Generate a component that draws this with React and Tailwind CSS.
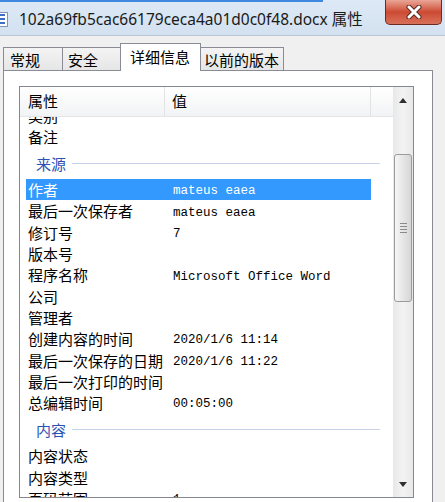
const cjk = "font-['Noto_Sans_CJK_SC','Noto_Sans',sans-serif]";
const mono = "font-['Liberation_Mono','DejaVu_Sans_Mono',monospace]";

const rows = [
  { label: '类别' },
  { label: '备注' },
  { group: '来源' },
  { label: '作者', value: 'mateus eaea', selected: true },
  { label: '最后一次保存者', value: 'mateus eaea' },
  { label: '修订号', value: '7' },
  { label: '版本号' },
  { label: '程序名称', value: 'Microsoft Office Word' },
  { label: '公司' },
  { label: '管理者' },
  { label: '创建内容的时间', value: '2020/1/6 11:14' },
  { label: '最后一次保存的日期', value: '2020/1/6 11:22' },
  { label: '最后一次打印的时间' },
  { label: '总编辑时间', value: '00:05:00' },
  { group: '内容' },
  { label: '内容状态' },
  { label: '内容类型' },
  { label: '页码范围', value: '1' },
];

const tabs = [
  { name: '常规', w: 'w-[60px] pl-[6px]' },
  { name: '安全', w: 'w-[59px] pl-[5px]' },
  { name: '详细信息', w: 'w-[81px] pl-[9px]', active: true },
  { name: '以前的版本', w: 'w-[84px] pl-[3px]' },
];

const Row = ({ label, value, selected }) => (
  <div
    className={`h-[21.3px] w-[345px] ml-[6px] flex items-center text-[15px] leading-none ${
      selected ? 'bg-[#3399ff] text-white' : 'text-black'
    }`}
  >
    <span className={`w-[147px] shrink-0 pl-[2px] whitespace-nowrap ${cjk}`}>{label}</span>
    {value && <span className={`pt-[4px] text-[12.5px] whitespace-pre ${mono}`}>{value}</span>}
  </div>
);

const GroupRow = ({ name }) => (
  <div className="h-[32px] w-[354px] ml-[6px] pl-[10px] flex items-center">
    <span className={`text-[15px] leading-none text-[#2a52b5] ${cjk}`}>{name}</span>
    <div className="flex-1 h-px bg-[#c8d3ea] ml-[6px]" />
  </div>
);

const Arrow = ({ down }) => (
  <svg width="8" height="5" viewBox="0 0 8 5">
    <path d={down ? 'M0 0 L8 0 L4 5 Z' : 'M0 5 L8 5 L4 0 Z'} fill="#303030" />
  </svg>
);

export default function App() {
  return (
    <div className={`w-[445px] h-[502px] overflow-hidden bg-[#f0f0f0] ${cjk}`}>
      {/* title bar */}
      <div className="h-[36px] flex items-start bg-gradient-to-b from-[#dde9f6] to-[#d3e1f0] border-b border-[#b8c6d6]">
        <div className="w-[385px] shrink-0">
          <div className="h-[2px] w-[323px] bg-[#3f88e0]" />
          <div className="flex items-center mt-[8px]">
            <div className="w-[8px] h-[15px] bg-white border-y border-r border-[#7d97b8] flex flex-col justify-center gap-[2px] pr-[2px]">
              <div className="h-[2px] bg-[#3e6fc4]" />
              <div className="h-[2px] bg-[#3e6fc4]" />
              <div className="h-[2px] bg-[#3e6fc4]" />
            </div>
            <span className="ml-[11px] text-[15.5px] leading-[18px] text-[#1a1a1a] whitespace-nowrap font-['Noto_Sans','Noto_Sans_CJK_SC',sans-serif]">
              102a69fb5cac66179ceca4a01d0c0f48.docx 属性
            </span>
          </div>
        </div>
        <div className="w-[57px] h-[25px] rounded-b-[5px] border border-t-0 border-[#6d2a20] bg-gradient-to-b from-[#e9a596] via-[#cc4a33] to-[#d8705a] flex items-center justify-center">
          <svg width="18" height="14" viewBox="0 0 18 14">
            <path d="M4 2 L14 12 M14 2 L4 12" stroke="#5a2a22" strokeWidth="5" strokeLinecap="round" />
            <path d="M4 2 L14 12 M14 2 L4 12" stroke="#ffffff" strokeWidth="3" strokeLinecap="round" />
          </svg>
        </div>
      </div>

      {/* tabs */}
      <div className="h-[34px] flex items-end pl-[3px]">
        {tabs.map((t, i) => (
          <div
            key={t.name}
            className={`${t.w} ${i > 0 ? '-ml-px' : ''} border border-b-0 border-[#898c95] flex items-center text-[15px] leading-none text-black ${
              t.active
                ? 'h-[28px] mb-[-1px] relative z-10 bg-white pb-[2px]'
                : 'h-[23px] bg-gradient-to-b from-[#f4f4f4] to-[#e6e6e6] pt-[1px]'
            }`}
          >
            {t.name}
          </div>
        ))}
      </div>

      {/* tab panel */}
      <div className="ml-[3px] w-[430px] h-[440px] border border-[#898c95] bg-white pl-[15px] pt-[15px]">
        <div className="w-[395px] h-[412px] border border-[#828790] flex">
          <div className="w-[373px] flex flex-col overflow-hidden">
            <div className="h-[30px] shrink-0 flex border-b border-[#e5e5e5] bg-gradient-to-b from-white to-[#f2f3f5] text-[15px] text-black">
              <div className="w-[145px] pl-[8px] flex items-center border-r border-[#e3e3e3]">属性</div>
              <div className="w-[206px] pl-[7px] flex items-center border-r border-[#e3e3e3]">值</div>
            </div>
            <div className="flex-1 overflow-hidden">
              <div className="mt-[-12.6px]">
                {rows.map((r, i) =>
                  r.group ? <GroupRow key={i} name={r.group} /> : <Row key={i} {...r} />
                )}
              </div>
            </div>
          </div>

          {/* scrollbar */}
          <div className="w-[20px] flex flex-col bg-gradient-to-r from-[#e8e8e8] via-[#f3f3f3] to-[#e8e8e8]">
            <div className="h-[26px] flex items-center justify-center pt-[1px]">
              <Arrow />
            </div>
            <div className="h-[41px]" />
            <div className="h-[148px] mx-[1px] rounded-[3px] border border-[#9b9b9b] bg-gradient-to-r from-[#f6f6f6] via-[#e6e6e6] to-[#d6d6d6] flex flex-col items-center justify-center gap-[2px]">
              <div className="w-[7px] h-px bg-[#8a8a8a]" />
              <div className="w-[7px] h-px bg-[#8a8a8a]" />
              <div className="w-[7px] h-px bg-[#8a8a8a]" />
              <div className="w-[7px] h-px bg-[#8a8a8a]" />
            </div>
            <div className="flex-1" />
            <div className="h-[26px] flex items-center justify-center">
              <Arrow down />
            </div>
          </div>
        </div>
      </div>
    </div>
  );
}
